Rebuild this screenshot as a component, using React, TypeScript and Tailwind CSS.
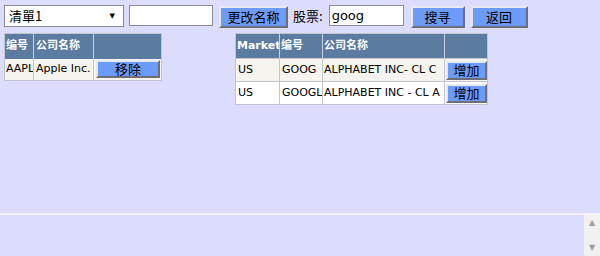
import React from 'react';

const font = { fontFamily: '"DejaVu Sans", Verdana, "Noto Sans CJK SC", sans-serif' };

const btn =
  'bg-[#6c9cf8] text-black text-[13px] leading-none border-2 border-t-[#e8e8f0] border-l-[#e8e8f0] border-r-[#6e6e78] border-b-[#6e6e78] flex items-center justify-center';

const watchlist = [{ code: 'AAPL', name: 'Apple Inc.' }];

const results = [
  { market: 'US', code: 'GOOG', name: 'ALPHABET INC- CL C', bg: 'bg-[#f6f4ef]' },
  { market: 'US', code: 'GOOGL', name: 'ALPHABET INC - CL A', bg: 'bg-white' },
];

export default function App() {
  return (
    <div className="w-[600px] h-[256px] bg-[#dcdcfd] flex flex-col overflow-hidden text-black" style={font}>
      <div className="h-[213px]">
        {/* toolbar */}
        <div className="flex items-start pt-[5px] pl-[4px] h-[33px]">
          <div className="w-[120px] h-[22px] bg-white border border-[#8a8a9a] flex items-center justify-between pl-[4px] pr-[8px] text-[13px]">
            <span style={{ fontFamily: '"Noto Sans CJK SC", sans-serif' }}>清單1</span>
            <span className="text-[7px]">▼</span>
          </div>
          <div className="ml-[5px] w-[84px] h-[21px] bg-white border border-[#8a8a9a]" />
          <button className={`${btn} ml-[6px] w-[69px] h-[22px] mt-[1px]`}>更改名称</button>
          <span className="ml-[5px] text-[13px] leading-[22px]" style={{ fontFamily: '"Noto Sans CJK SC", sans-serif' }}>股票:</span>
          <div className="ml-[6px] w-[75px] h-[21px] bg-white border border-[#8a8a9a] pl-[2px] text-[13px] leading-[19px]">goog</div>
          <button className={`${btn} ml-[7px] w-[54px] h-[22px] mt-[1px]`}>搜寻</button>
          <button className={`${btn} ml-[6px] w-[57px] h-[22px] mt-[1px]`}>返回</button>
        </div>

        <div className="flex items-start pl-[4px] text-[11px]">
          {/* watch list */}
          <table className="table-fixed w-[157px] border-collapse border border-[#c4c4cc]">
            <colgroup>
              <col className="w-[29px]" />
              <col className="w-[60px]" />
              <col className="w-[68px]" />
            </colgroup>
            <thead>
              <tr className="bg-[#5b7ba0] text-white h-[25px]">
                <th className="px-[1px] text-left border-r border-[#c8d0dc] font-bold overflow-hidden whitespace-nowrap">编号</th>
                <th className="px-[2px] text-left border-r border-[#c8d0dc] font-bold overflow-hidden whitespace-nowrap">公司名称</th>
                <th />
              </tr>
            </thead>
            <tbody>
              {watchlist.map((r) => (
                <tr key={r.code} className="bg-[#f6f4ef] h-[22px]">
                  <td className="px-[1px] border-r border-[#c4c4cc] overflow-hidden whitespace-nowrap">{r.code}</td>
                  <td className="px-[2px] border-r border-[#c4c4cc] overflow-hidden whitespace-nowrap">{r.name}</td>
                  <td className="px-[2px]">
                    <button className={`${btn} w-[64px] h-[18px]`}>移除</button>
                  </td>
                </tr>
              ))}
            </tbody>
          </table>

          {/* search results */}
          <table className="ml-[73px] table-fixed w-[252px] border-collapse border border-[#c4c4cc]">
            <colgroup>
              <col className="w-[44px]" />
              <col className="w-[43px]" />
              <col className="w-[122px]" />
              <col className="w-[43px]" />
            </colgroup>
            <thead>
              <tr className="bg-[#5b7ba0] text-white h-[25px]">
                <th className="px-[1px] text-left border-r border-[#c8d0dc] font-bold overflow-hidden whitespace-nowrap">Market</th>
                <th className="px-[1px] text-left border-r border-[#c8d0dc] font-bold overflow-hidden whitespace-nowrap">编号</th>
                <th className="px-[1px] text-left border-r border-[#c8d0dc] font-bold overflow-hidden whitespace-nowrap">公司名称</th>
                <th />
              </tr>
            </thead>
            <tbody>
              {results.map((r) => (
                <tr key={r.code} className={`${r.bg} h-[23px] border-t border-[#c4c4cc]`}>
                  <td className="px-[2px] border-r border-[#c4c4cc] overflow-hidden whitespace-nowrap">{r.market}</td>
                  <td className="px-[2px] border-r border-[#c4c4cc] overflow-hidden whitespace-nowrap">{r.code}</td>
                  <td className="px-[1px] border-r border-[#c4c4cc] overflow-hidden whitespace-nowrap">{r.name}</td>
                  <td className="px-[1px]">
                    <button className={`${btn} w-[41px] h-[19px]`}>增加</button>
                  </td>
                </tr>
              ))}
            </tbody>
          </table>
        </div>
      </div>

      {/* lower frame */}
      <div className="flex-1 border-t-2 border-[#f4f4fc] flex">
        <div className="flex-1" />
        <div className="w-[16px] bg-[#f1f1f1] flex flex-col items-center justify-between py-[4px] text-[8px] text-[#a0a0a0] leading-none">
          <span>▲</span>
          <span>▼</span>
        </div>
      </div>
    </div>
  );
}
